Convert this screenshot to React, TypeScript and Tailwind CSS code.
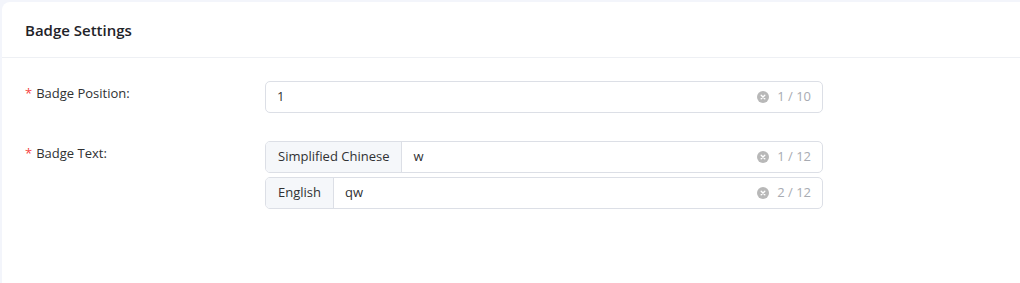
import React from "react";

function ClearIcon() {
  return (
    <svg width="12" height="12" viewBox="0 0 12 12" className="shrink-0">
      <circle cx="6" cy="6" r="6" fill="#b8b8b8" />
      <path d="M4.2 4.2L7.8 7.8M7.8 4.2L4.2 7.8" stroke="#fff" strokeWidth="1.3" strokeLinecap="round" />
    </svg>
  );
}

function Counter({ text }: { text: string }) {
  return (
    <div className="flex items-center gap-[8px] text-[13px] text-[#a8abb2]">
      <ClearIcon />
      <span>{text}</span>
    </div>
  );
}

function Label({ text }: { text: string }) {
  return (
    <div className="w-[240px] shrink-0 pt-[3px] text-[13px] text-[#303133]">
      <span className="text-[#f53f3f] mr-[4px]">*</span>
      {text}
    </div>
  );
}

function GroupInput({ addon, value, count }: { addon: string; value: string; count: string }) {
  return (
    <div className="flex h-[32px] w-[558px] rounded-[5px] border border-[#dcdfe6] overflow-hidden">
      <div className="flex items-center px-[12px] bg-[#f5f7fa] border-r border-[#dcdfe6] text-[13px] text-[#303133]">
        {addon}
      </div>
      <div className="flex flex-1 items-center justify-between pl-[11px] pr-[11px] text-[13px] text-[#303133]">
        <span>{value}</span>
        <Counter text={count} />
      </div>
    </div>
  );
}

export default function App() {
  return (
    <div
      className="h-[283px] w-[1020px] overflow-hidden bg-[#f3f5fb] pl-[2px] pt-[2px]"
      style={{ fontFamily: '"Open Sans", "Noto Sans", sans-serif' }}
    >
      <div className="h-[300px] w-[1040px] rounded-tl-[8px] bg-white">
        <div className="flex h-[56px] items-center border-b border-[#eef0f4] pl-[23px] pt-[1px] text-[15px] font-semibold text-[#1f2329]">
          Badge Settings
        </div>
        <div className="flex flex-col gap-[28px] pl-[23px] pt-[23px]">
          <div className="flex">
            <Label text="Badge Position:" />
            <div className="flex h-[32px] w-[558px] items-center justify-between rounded-[5px] border border-[#dcdfe6] px-[11px] text-[13px] text-[#303133]">
              <span>1</span>
              <Counter text="1 / 10" />
            </div>
          </div>
          <div className="flex">
            <Label text="Badge Text:" />
            <div className="flex flex-col gap-[4px]">
              <GroupInput addon="Simplified Chinese" value="w" count="1 / 12" />
              <GroupInput addon="English" value="qw" count="2 / 12" />
            </div>
          </div>
        </div>
      </div>
    </div>
  );
}
